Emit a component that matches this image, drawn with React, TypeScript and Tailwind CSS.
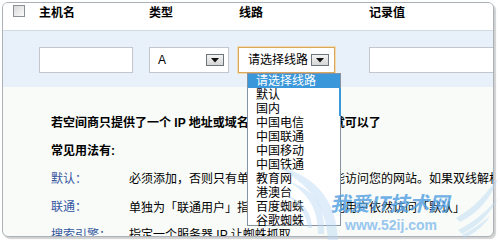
import React from 'react';

const items = ['请选择线路', '默认', '国内', '中国电信', '中国联通', '中国移动', '中国铁通', '教育网', '港澳台', '百度蜘蛛', '谷歌蜘蛛'];

function DropBtn() {
  return (
    <div className="w-[18px] h-[12px] border border-[#6f747a] bg-gradient-to-b from-[#f4f4f4] to-[#d6d6d6] flex items-center justify-center">
      <svg width="8" height="5" viewBox="0 0 8 5">
        <path d="M0 0 L8 0 L4 4.5 Z" fill="#111" />
      </svg>
    </div>
  );
}

export default function App() {
  return (
    <div className="w-[500px] h-[240px] bg-white relative overflow-hidden font-['Liberation_Sans','Noto_Sans_CJK_SC',sans-serif] text-[12px] text-black">
      <div className="ml-[2px] mt-[2px] w-[492px] h-[235px] border border-[#aab1b9] rounded-[6px] overflow-hidden shadow-[2px_2px_1px_rgba(0,0,0,0.18)] flex flex-col bg-[#f8fbf8]">
        {/* header */}
        <div className="h-[28px] shrink-0 bg-white border-b border-[#d3dae2] grid grid-cols-[36px_110px_90px_130px_1fr] items-start pt-[2px] font-bold leading-[14px]">
          <div className="pl-[10px]">
            <div className="w-[12px] h-[12px] border border-[#8b9096] bg-gradient-to-br from-[#d8d8d8] to-[#fbfbfb]" />
          </div>
          <div className="pt-[1px]">主机名</div>
          <div className="pt-[1px]">类型</div>
          <div className="pt-[1px]">线路</div>
          <div className="pt-[1px]">记录值</div>
        </div>

        {/* input band */}
        <div className="h-[56px] shrink-0 bg-[#e8f0f9] grid grid-cols-[36px_110px_90px_130px_1fr] items-start pt-[16px]">
          <div />
          <div>
            <div className="w-[94px] h-[26px] bg-white border border-[#c3c7cc]" />
          </div>
          <div>
            <div className="w-[80px] h-[26px] bg-white border border-[#c3c7cc] flex items-center pl-[8px] pr-[4px] justify-between">
              <span className="leading-[14px]">A</span>
              <DropBtn />
            </div>
          </div>
          <div className="relative">
            <div className="ml-[-1px] w-[97px] h-[26px] bg-white border border-[#d9a85e] shadow-[0_0_0_1px_#f2dbac] flex items-center pl-[9px] pr-[5px] justify-between">
              <span className="leading-[14px]">请选择线路</span>
              <DropBtn />
            </div>
            <div className="absolute left-[8px] top-[26px] w-[94px] h-[153px] bg-white border border-[#8493a3] z-10 flex flex-col">
              {items.map((t, i) => (
                <div
                  key={t}
                  className={
                    i === 0
                      ? 'h-[14px] leading-[14px] pl-[8px] bg-[#3a97d9] text-white'
                      : 'h-[14px] leading-[14px] pl-[8px] text-black'
                  }
                >
                  {t}
                </div>
              ))}
              <div className="absolute right-[-1px] top-[14px] w-[2px] h-[28px] bg-[#3a97d9]" />
            </div>
          </div>
          <div>
            <div className="w-[140px] h-[26px] bg-white border border-[#c3c7cc]" />
          </div>
        </div>

        {/* content */}
        <div className="pl-[48px] pt-[22px] leading-[28px] whitespace-nowrap">
          <div className="font-bold">若空间商只提供了一个 IP 地址或域名，添加一条记录就可以了</div>
          <div className="font-bold">常见用法有:</div>
          <div className="grid grid-cols-[78px_1fr]">
            <span className="text-[#34569f]">默认：</span>
            <span>必须添加，否则只有单独立线路用户才能访问您的网站。如果双线解析</span>
          </div>
          <div className="grid grid-cols-[78px_1fr]">
            <span className="text-[#34569f]">联通：</span>
            <span className="font-['Noto_Sans_CJK_SC',sans-serif]">单独为「联通用户」指定解析记录，其他用户依然访问「默认」</span>
          </div>
          <div className="grid grid-cols-[78px_1fr]">
            <span className="text-[#34569f]">搜索引擎：</span>
            <span>指定一个服务器 IP 让蜘蛛抓取</span>
          </div>
        </div>
      </div>

      {/* watermark */}
      <div className="absolute left-[270px] top-[160px] w-[230px] h-[80px] pointer-events-none z-20">
        <svg width="230" height="80" viewBox="0 0 230 80" className="absolute left-0 top-0">
          <g fill="#b9d8f3" fillOpacity="0.45" stroke="none">
            <path d="M6 6 C40 14 66 34 68 80 L58 80 C56 44 38 24 6 6 Z" />
            <path d="M20 22 C44 30 56 46 54 74 L48 74 C48 50 40 36 20 22 Z" />
            <path d="M14 34 C32 40 42 52 42 68 L38 68 C36 54 30 44 14 34 Z" />
            <path d="M228 18 C222 36 210 52 190 62 L186 58 C204 48 216 34 228 18 Z" />
            <path d="M228 38 C220 54 208 66 192 74 L188 70 C204 62 216 52 228 38 Z" />
            <path d="M220 56 C214 66 204 74 194 78 L192 75 C202 70 210 64 220 56 Z" />
          </g>
        </svg>
        <div className="absolute left-[60px] top-[31px] text-[20px] leading-[24px] font-bold italic text-[#4f9ee2] opacity-80 font-['Noto_Sans_CJK_SC',sans-serif] whitespace-nowrap">
          我爱IT技术网
        </div>
        <div className="absolute left-[75px] top-[58px] text-[14px] leading-[14px] font-bold text-[#8fc2ee] opacity-90 font-['Liberation_Sans',sans-serif] whitespace-nowrap">
          www.52ij.com
        </div>
      </div>
    </div>
  );
}
